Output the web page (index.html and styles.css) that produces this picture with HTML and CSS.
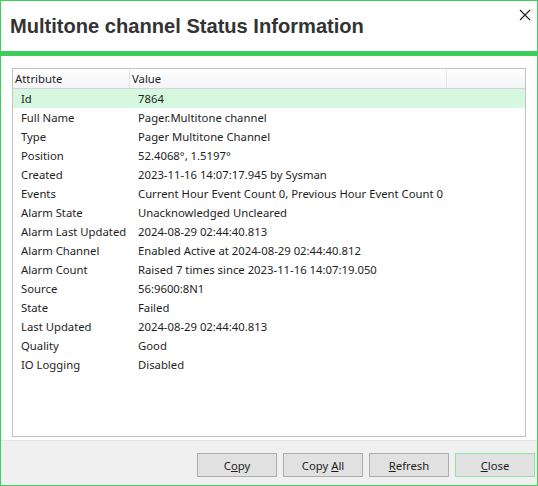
FILE: index.html
```html
<!DOCTYPE html>
<html>
<head>
<meta charset="utf-8">
<link rel="stylesheet" href="styles.css">
</head>
<body>
<div class="window">
  <div class="titlebar">
    <h1 class="title">Multitone channel Status Information</h1>
    <svg class="close-x" width="12" height="12" viewBox="0 0 12 12"><path d="M1 1 L11 11 M11 1 L1 11" stroke="#222" stroke-width="1.1" fill="none"/></svg>
  </div>
  <div class="accent"></div>
  <div class="content">
    <div class="listbox">
      <div class="header">
        <div class="hcell c1">Attribute</div>
        <div class="hcell c2">Value</div>
        <div class="hcell c3"></div>
      </div>
      <div class="row selected"><span class="attr">Id</span><span class="val">7864</span></div>
      <div class="row"><span class="attr">Full Name</span><span class="val">Pager.Multitone channel</span></div>
      <div class="row"><span class="attr">Type</span><span class="val">Pager Multitone Channel</span></div>
      <div class="row"><span class="attr">Position</span><span class="val">52.4068°, 1.5197°</span></div>
      <div class="row"><span class="attr">Created</span><span class="val">2023-11-16 14:07:17.945 by Sysman</span></div>
      <div class="row"><span class="attr">Events</span><span class="val">Current Hour Event Count 0, Previous Hour Event Count 0</span></div>
      <div class="row"><span class="attr">Alarm State</span><span class="val">Unacknowledged Uncleared</span></div>
      <div class="row"><span class="attr">Alarm Last Updated</span><span class="val">2024-08-29 02:44:40.813</span></div>
      <div class="row"><span class="attr">Alarm Channel</span><span class="val">Enabled Active at 2024-08-29 02:44:40.812</span></div>
      <div class="row"><span class="attr">Alarm Count</span><span class="val">Raised 7 times since 2023-11-16 14:07:19.050</span></div>
      <div class="row"><span class="attr">Source</span><span class="val">56:9600:8N1</span></div>
      <div class="row"><span class="attr">State</span><span class="val">Failed</span></div>
      <div class="row"><span class="attr">Last Updated</span><span class="val">2024-08-29 02:44:40.813</span></div>
      <div class="row"><span class="attr">Quality</span><span class="val">Good</span></div>
      <div class="row"><span class="attr">IO Logging</span><span class="val">Disabled</span></div>
    </div>
  </div>
  <div class="buttons">
    <button class="btn">C<u>o</u>py</button>
    <button class="btn">Copy <u>A</u>ll</button>
    <button class="btn"><u>R</u>efresh</button>
    <button class="btn default"><u>C</u>lose</button>
  </div>
</div>
</body>
</html>
```

FILE: styles.css
```css
html, body {
  margin: 0;
  padding: 0;
  background: #ffffff;
}
body {
  font-family: "Noto Sans", "Open Sans", sans-serif;
  font-size: 11.3px;
  color: #1e1e1e;
}
.window {
  width: 538px;
  height: 486px;
  box-sizing: border-box;
  border: 1px solid #3ecd5a;
  display: flex;
  flex-direction: column;
  background: #ffffff;
}
.titlebar {
  height: 50px;
  position: relative;
  display: flex;
  align-items: flex-start;
  flex-shrink: 0;
}
.title {
  margin: 0;
  padding: 14px 0 0 9px;
  font-family: "Liberation Sans", Arial, sans-serif;
  font-weight: bold;
  font-size: 20.1px;
  line-height: 23px;
  color: #333333;
}
.close-x {
  position: absolute;
  right: 6px;
  top: 8px;
}
.accent {
  height: 5px;
  background: #3ecd5a;
  flex-shrink: 0;
}
.content {
  flex: 1;
  padding: 12px 11px 3px 11px;
  display: flex;
  flex-direction: column;
}
.listbox {
  flex: 1;
  border: 1px solid #c3c3c3;
  background: #ffffff;
}
.header {
  display: flex;
  height: 19px;
  border-bottom: 1px solid #d5d5d5;
  background: linear-gradient(#ffffff, #f3f4f7);
}
.hcell {
  line-height: 19px;
  padding-left: 2px;
  box-sizing: border-box;
}
.c1 { width: 117px; border-right: 1px solid #e5e5e5; }
.c2 { width: 317px; border-right: 1px solid #e5e5e5; }
.c3 { flex: 1; }
.row {
  display: flex;
  height: 19px;
  line-height: 20px;
  white-space: nowrap;
}
.row.selected {
  background: #d5f8de;
}
.attr {
  width: 117px;
  padding-left: 8px;
  flex-shrink: 0;
}
.val {
  flex: 1;
}
.buttons {
  height: 45px;
  flex-shrink: 0;
  background: #f0f0f0;
  border-top: 1px solid #e4e4e4;
  display: flex;
  justify-content: flex-end;
  align-items: flex-start;
  gap: 6px;
  padding: 12px 2px 0 0;
  box-sizing: border-box;
}
.btn {
  width: 80px;
  height: 24px;
  margin: 0;
  padding: 0;
  border: 1px solid #adadad;
  background: #e1e1e1;
  font-family: "Noto Sans", "Open Sans", sans-serif;
  font-size: 11.3px;
  color: #1e1e1e;
}
.btn.default {
  border-color: #8fe3a2;
}
```
